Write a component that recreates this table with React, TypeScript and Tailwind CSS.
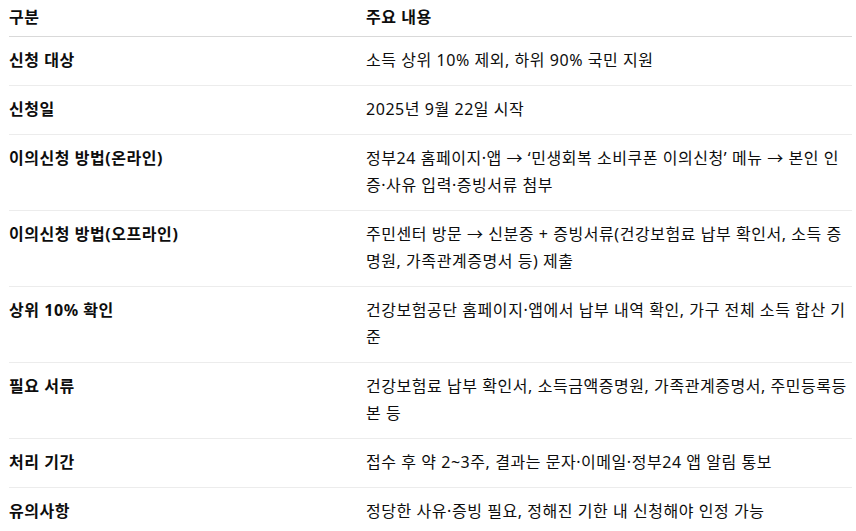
const rows: [string, string][] = [
  ['신청 대상', '소득 상위 10% 제외, 하위 90% 국민 지원'],
  ['신청일', '2025년 9월 22일 시작'],
  ['이의신청 방법(온라인)', '정부24 홈페이지·앱 → ‘민생회복 소비쿠폰 이의신청’ 메뉴 → 본인 인증·사유 입력·증빙서류 첨부'],
  ['이의신청 방법(오프라인)', '주민센터 방문 → 신분증 + 증빙서류(건강보험료 납부 확인서, 소득 증명원, 가족관계증명서 등) 제출'],
  ['상위 10% 확인', '건강보험공단 홈페이지·앱에서 납부 내역 확인, 가구 전체 소득 합산 기준'],
  ['필요 서류', '건강보험료 납부 확인서, 소득금액증명원, 가족관계증명서, 주민등록등본 등'],
  ['처리 기간', '접수 후 약 2~3주, 결과는 문자·이메일·정부24 앱 알림 통보'],
  ['유의사항', '정당한 사유·증빙 필요, 정해진 기한 내 신청해야 인정 가능'],
];

export default function App() {
  return (
    <div className="min-h-screen bg-white pl-[9px] pr-[3px] font-['Noto_Sans','Noto_Sans_CJK_KR',sans-serif] text-[16px] leading-[27px] tracking-[0.55px] text-[#0d0d0d]">
      <table className="w-[843px] border-collapse table-fixed">
        <thead>
          <tr className="border-b border-[#d9d9d9]">
            <th className="w-[357px] pt-[4px] pb-[5px] text-left font-bold">구분</th>
            <th className="pt-[4px] pb-[5px] text-left font-bold">주요 내용</th>
          </tr>
        </thead>
        <tbody>
          {rows.map(([label, text], i) => (
            <tr key={label} className={i < rows.length - 1 ? 'border-b border-[#ececec]' : ''}>
              <td className="pt-[10px] pb-[11px] align-top font-bold">{label}</td>
              <td className="pt-[10px] pb-[11px] align-top">{text}</td>
            </tr>
          ))}
        </tbody>
      </table>
    </div>
  );
}
